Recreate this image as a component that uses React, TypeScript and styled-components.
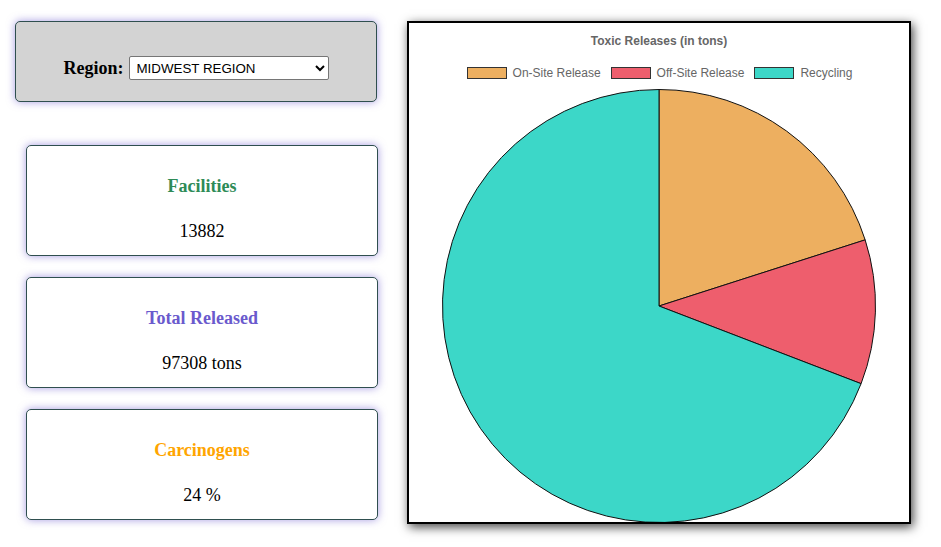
import React from "react";
import styled, { createGlobalStyle } from "styled-components";

const GlobalStyle = createGlobalStyle`
  html, body { margin: 0; padding: 0; background: #ffffff; }
  body { font-family: "Liberation Serif", "Times New Roman", serif; color: #000; }
`;

const Page = styled.div`
  display: flex;
  align-items: flex-start;
  width: 941px;
  height: 547px;
  box-sizing: border-box;
  padding-top: 21px;
`;

const LeftColumn = styled.div`
  display: flex;
  flex-direction: column;
  width: 378px;
  flex-shrink: 0;
`;

const RegionBox = styled.div`
  box-sizing: border-box;
  margin-left: 15px;
  width: 362px;
  height: 81px;
  background: #d3d3d3;
  border: 1px solid #2f4f4f;
  border-radius: 5px;
  box-shadow: 0 0 9px rgba(106, 90, 205, 0.6);
  display: flex;
  align-items: center;
  justify-content: center;
  padding-top: 13px;
`;

const RegionLabel = styled.label`
  font-family: "Liberation Serif", "Times New Roman", serif;
  font-weight: bold;
  font-size: 18px;
  margin-right: 5px;
`;

const RegionSelect = styled.select`
  width: 200px;
  height: 24px;
  font-family: "Liberation Sans", Arial, sans-serif;
  font-size: 13.33px;
  background: #fff;
  color: #000;
  border: 1px solid #767676;
  border-radius: 2px;
  padding: 0 3px;
`;

const Cards = styled.div`
  display: flex;
  flex-direction: column;
  gap: 21px;
  margin-top: 43px;
  margin-left: 26px;
`;

const Card = styled.div`
  box-sizing: border-box;
  width: 352px;
  height: 111px;
  background: #fff;
  border: 1px solid #2f4f4f;
  border-radius: 5px;
  box-shadow: 0 0 9px rgba(106, 90, 205, 0.6);
  display: flex;
  flex-direction: column;
  align-items: center;
  padding-top: 28px;
  gap: 21px;
`;

const CardTitle = styled.div<{ $color: string }>`
  font-weight: bold;
  font-size: 18px;
  line-height: 24px;
  color: ${(p) => p.$color};
`;

const CardValue = styled.div`
  font-size: 18px;
  line-height: 24px;
  color: #000;
`;

const ChartPanel = styled.div`
  box-sizing: border-box;
  margin-left: 29px;
  width: 504px;
  height: 503px;
  border: 2px solid #000;
  background: #fff;
  box-shadow: 2px 3px 10px rgba(0, 0, 0, 0.75);
  display: flex;
  flex-direction: column;
  align-items: center;
  overflow: hidden;
`;

const ChartTitle = styled.div`
  margin-top: 11px;
  font-family: "Liberation Sans", Arial, sans-serif;
  font-weight: bold;
  font-size: 12px;
  line-height: 14px;
  color: #666;
`;

const Legend = styled.div`
  margin-top: 19px;
  display: flex;
  align-items: center;
  gap: 10px;
  height: 12px;
  padding-left: 1px;
`;

const LegendItem = styled.div`
  display: flex;
  align-items: center;
  gap: 6px;
  font-family: "Liberation Sans", Arial, sans-serif;
  font-size: 12px;
  line-height: 12px;
  color: #666;
`;

const LegendSwatch = styled.span<{ $color: string }>`
  box-sizing: border-box;
  width: 40px;
  height: 12px;
  background: ${(p) => p.$color};
  border: 1px solid #333;
`;

const PieWrap = styled.div`
  margin-top: 10px;
  width: 434px;
  height: 434px;
  flex-shrink: 0;
`;

const slices = [
  { label: "On-Site Release", color: "#edaf60", value: 20.06 },
  { label: "Off-Site Release", color: "#ee5e6d", value: 10.78 },
  { label: "Recycling", color: "#3cd7c8", value: 69.16 },
];

function PieChart() {
  const cx = 217;
  const cy = 217;
  const r = 216.5;
  const total = slices.reduce((s, d) => s + d.value, 0);
  let angle = -Math.PI / 2;
  return (
    <svg width="434" height="434" viewBox="0 0 434 434">
      {slices.map((s) => {
        const start = angle;
        const sweep = (s.value / total) * Math.PI * 2;
        const end = start + sweep;
        angle = end;
        const x1 = cx + r * Math.cos(start);
        const y1 = cy + r * Math.sin(start);
        const x2 = cx + r * Math.cos(end);
        const y2 = cy + r * Math.sin(end);
        const large = sweep > Math.PI ? 1 : 0;
        const d = `M ${cx} ${cy} L ${x1} ${y1} A ${r} ${r} 0 ${large} 1 ${x2} ${y2} Z`;
        return (
          <path
            key={s.label}
            d={d}
            fill={s.color}
            stroke="#111"
            strokeWidth={1}
            strokeLinejoin="round"
          />
        );
      })}
    </svg>
  );
}

const stats = [
  { title: "Facilities", color: "#2e8b57", value: "13882" },
  { title: "Total Released", color: "#6a5acd", value: "97308 tons" },
  { title: "Carcinogens", color: "#ffa500", value: "24 %" },
];

export default function App() {
  return (
    <>
      <GlobalStyle />
      <Page>
        <LeftColumn>
          <RegionBox>
            <RegionLabel htmlFor="region">Region:</RegionLabel>
            <RegionSelect id="region" defaultValue="MIDWEST REGION">
              <option>MIDWEST REGION</option>
              <option>NORTHEAST REGION</option>
              <option>SOUTH REGION</option>
              <option>WEST REGION</option>
            </RegionSelect>
          </RegionBox>
          <Cards>
            {stats.map((s) => (
              <Card key={s.title}>
                <CardTitle $color={s.color}>{s.title}</CardTitle>
                <CardValue>{s.value}</CardValue>
              </Card>
            ))}
          </Cards>
        </LeftColumn>
        <ChartPanel>
          <ChartTitle>Toxic Releases (in tons)</ChartTitle>
          <Legend>
            {slices.map((s) => (
              <LegendItem key={s.label}>
                <LegendSwatch $color={s.color} />
                {s.label}
              </LegendItem>
            ))}
          </Legend>
          <PieWrap>
            <PieChart />
          </PieWrap>
        </ChartPanel>
      </Page>
    </>
  );
}
